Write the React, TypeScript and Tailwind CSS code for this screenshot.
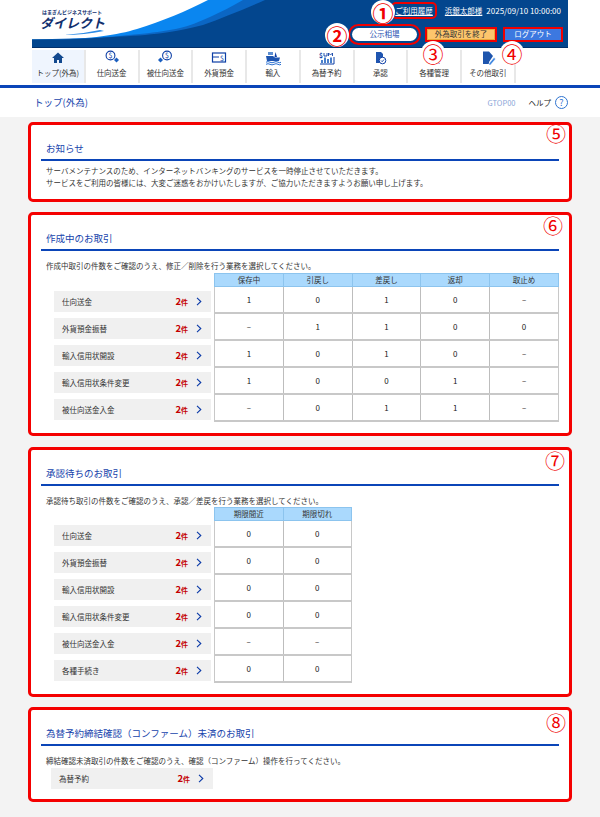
import React from "react";

const F = '"Noto Sans CJK JP", "Noto Sans", sans-serif';

function Ic({ children, w = 18 }: { children: React.ReactNode; w?: number }) {
  return (
    <svg width={w} height="16" viewBox="0 0 18 16" fill="none">
      {children}
    </svg>
  );
}

const icons: React.ReactNode[] = [
  <Ic key="home">
    <path d="M9 2.5 L3 8 H5 V13 H8 V10 H10 V13 H13 V8 H15 Z" fill="#12498f" />
  </Ic>,
  <Ic key="out">
    <circle cx="7.5" cy="5.5" r="4.4" stroke="#0d3fa6" strokeWidth="1.1" fill="#fff" />
    <text x="7.5" y="8" textAnchor="middle" fontSize="7" fill="#0d3fa6">$</text>
    <path d="M13.5 7.5 L16 10 L13.5 12.5 L11 10 Z" fill="#1b5fc0" />
  </Ic>,
  <Ic key="in">
    <circle cx="11" cy="5.5" r="4.4" stroke="#0d3fa6" strokeWidth="1.1" fill="#fff" />
    <text x="11" y="8" textAnchor="middle" fontSize="7" fill="#0d3fa6">$</text>
    <path d="M4.5 7.5 L7 10 L4.5 12.5 L2 10 Z" fill="#1b5fc0" />
  </Ic>,
  <Ic key="dep">
    <rect x="2.5" y="3" width="13" height="9" stroke="#0d3fa6" strokeWidth="1.2" fill="#fff" />
    <path d="M2.5 7 H9" stroke="#0d3fa6" strokeWidth="1" />
    <text x="12" y="10.5" textAnchor="middle" fontSize="7" fill="#0d3fa6">$</text>
  </Ic>,
  <Ic key="imp">
    <path d="M4 2 H9 V5 H4 Z" fill="#5f8fd0" />
    <path d="M11.5 2 L13 7 H10.5 Z" fill="#0d3fa6" />
    <path d="M2 6 H9 L11 7.5 H16 L15 11 H3 Z" fill="#1f55b0" />
    <path d="M2 12.2 Q4 11 6 12.2 T10 12.2 T14 12.2 T17 12.2 M2 14.3 Q4 13.1 6 14.3 T10 14.3 T14 14.3 T17 14.3" stroke="#2a6fd0" strokeWidth="1" />
  </Ic>,
  <Ic key="fx">
    <text x="1" y="8" fontSize="6.5" fontWeight="700" fill="#0d3fa6">$</text>
    <path d="M6 3 V6 H9 V3 M10.5 6 V3 L12.5 5 L14.5 3 V6" stroke="#0d3fa6" strokeWidth="0.9" />
    <path d="M2 14 H16 V7" stroke="#0d3fa6" strokeWidth="1" />
    <path d="M4 13 V10 M7 13 V7.5 M10 13 V9 M13 13 V7.5" stroke="#1b5fc0" strokeWidth="1.6" />
  </Ic>,
  <Ic key="app">
    <path d="M5 2 H10 L12 4 V8 L9 13 H5 Z" fill="#1f55b0" />
    <circle cx="11.5" cy="10.5" r="3.3" fill="#fff" stroke="#0d3fa6" strokeWidth="1" />
    <path d="M10 10.5 L11.2 11.7 L13 9.5" stroke="#0d3fa6" strokeWidth="0.9" />
  </Ic>,
  <Ic key="mgr">
    <circle cx="9" cy="5" r="3" fill="#1f55b0" />
    <path d="M3 14 Q9 7 15 14 Z" fill="#0d3fa6" />
  </Ic>,
  <Ic key="oth">
    <path d="M4 1.5 H10 L14 6 L10 12 V14 H4 Z" fill="#1e55ad" />
    <path d="M10 13.5 L15 7.5 L16.5 9 L11.5 15 H10 Z" fill="#3f87e0" stroke="#fff" strokeWidth="0.5" />
  </Ic>,
];

const nav = ["トップ(外為)", "仕向送金", "被仕向送金", "外貨預金", "輸入", "為替予約", "承認", "各種管理", "その他取引"];

function Chevron() {
  return (
    <svg width="6" height="9" viewBox="0 0 6 9" fill="none">
      <path d="M1 0.8 L4.8 4.5 L1 8.2" stroke="#0b3aa8" strokeWidth="1.1" />
    </svg>
  );
}

function Count() {
  return (
    <span className="text-[#c40000] flex items-baseline">
      <span className="text-[9.5px] font-bold leading-none">2</span>
      <span className="text-[7px] font-bold leading-none">件</span>
    </span>
  );
}

function Label({ text }: { text: string }) {
  return (
    <div className="h-[21px] bg-[#f0f0f0] flex items-center pl-[8px] text-[7.5px] text-[#333]">
      <span className="flex-1">{text}</span>
      <Count />
      <span className="ml-[8px] mr-[9px] flex">
        <Chevron />
      </span>
    </div>
  );
}

function Grid({ heads, rows, className }: { heads: string[]; rows: string[][]; className: string }) {
  return (
    <div className={"flex flex-col shrink-0 " + className}>
      <div className="flex h-[14px] bg-[#aad9fd] border border-[#8cc4ee]">
        {heads.map((h, i) => (
          <div key={h} className={"flex-1 flex items-center justify-center text-[7.5px] text-[#333] " + (i < heads.length - 1 ? "border-r border-[#8cc4ee]" : "")}>
            {h}
          </div>
        ))}
      </div>
      {rows.map((r, i) => (
        <div key={i} className="flex h-[27px] bg-white border-l border-r border-b-2 border-[#c8c8c8]">
          {r.map((c, j) => (
            <div key={j} className={"flex-1 flex items-center justify-center text-[8px] text-[#222] " + (j < r.length - 1 ? "border-r border-[#bdbdbd]" : "")}>
              {c}
            </div>
          ))}
        </div>
      ))}
    </div>
  );
}

function Card({ title, children, className }: { title: string; children: React.ReactNode; className: string }) {
  return (
    <section className={"border-[3px] border-[#f40000] rounded-[5px] bg-white px-[10px] pt-[17px] " + className}>
      <div className="border-b-2 pb-[5px] border-[#0b45b8] pl-[5px]">
        <h2 className="text-[9.5px] leading-[12px] text-[#1744ac]">{title}</h2>
      </div>
      {children}
    </section>
  );
}

function Mark({ n, className }: { n: string; className: string }) {
  return <span className={"absolute text-[#f00000] flex items-center justify-center leading-[24px] " + className}>{n}</span>;
}

const rowsA = [
  ["1", "0", "1", "0", "–"],
  ["–", "1", "1", "0", "0"],
  ["1", "0", "1", "0", "–"],
  ["1", "0", "0", "1", "–"],
  ["–", "0", "1", "1", "–"],
];
const rowsB = [
  ["0", "0"],
  ["0", "0"],
  ["0", "0"],
  ["0", "0"],
  ["–", "–"],
  ["0", "0"],
];

export default function App() {
  return (
    <div className="relative w-[600px] h-[817px] bg-[#f3f3f3] overflow-hidden" style={{ fontFamily: F }}>
      <div className="bg-white">
        {/* header */}
        <header className="relative mx-[32px] h-[48px]">
          <svg className="absolute inset-0" width="536" height="48" viewBox="0 0 536 48">
            <path d="M20 39.5 C60 39 85 35 105 29 C130 21 155 11 176 0 H536 V48 H0 V39.5 Z" fill="#0a86f0" />
            <path d="M60 38 C100 35 125 33 148 28 C165 24 190 12 211 0 H536 V48 H0 V39.5 Z" fill="#0b66c4" />
            <path d="M0 39.5 H31 C50 39 65 38 81 37 C100 36 115 35 131 33 C150 30 160 28 171 25 C190 18 210 10 233 0 H536 V48 H0 Z" fill="#03468e" />
            <path d="M0 47.5 H536" stroke="#02306a" strokeWidth="1" />
          </svg>
          <div className="absolute left-[8px] top-[8px] w-[66px]">
            <div className="pl-[2px] text-[5px] leading-[8px] font-bold text-[#12306e] whitespace-nowrap">はまぎんビジネスサポート</div>
            <div className="text-[13px] leading-[14px] font-bold italic text-[#12306e] whitespace-nowrap">ダイレクト</div>
            <svg width="66" height="5" viewBox="0 0 66 5" className="block">
              <path d="M24 5 Q42 4 60 0 L64 1 Q44 5 24 5 Z" fill="#2c8be6" />
            </svg>
          </div>
          <div className="relative flex flex-col items-end h-full pr-[7px] text-white">
            <div className="flex items-center h-[21px] text-[7.5px]">
              <span className="underline ring-2 ring-[#f00000] rounded-[3px] px-[2px] py-[1px] mr-[10px]">ご利用履歴</span>
              <span className="underline mr-[4px]">浜銀太郎様</span>
              <span className="text-[8px]">2025/09/10 10:00:00</span>
            </div>
            <div className="flex items-center h-[20px] mt-[3px] gap-[10px]">
              <button className="w-[65px] h-[13px] bg-white rounded-full text-[#1c4fb0] text-[7.5px] leading-none outline-2 outline-[#f00000] outline-offset-2">公示相場</button>
              <button className="w-[68px] h-[11px] bg-[#fdc56c] border border-[#e8a93a] text-[#333] text-[7.5px] leading-none outline-2 outline-[#f00000]">外為取引を終了</button>
              <button className="w-[56px] h-[11px] bg-[#3c78e0] text-white text-[7.5px] leading-none outline-2 outline-[#f00000]">ログアウト</button>
            </div>
          </div>
        </header>
        {/* nav */}
        <nav className="mt-[2px] h-[35px] border-b-[3px] border-[#0b45b8] box-content">
          <div className="flex pl-[32px] h-[33px]">
            {nav.map((n, i) => (
              <div key={n} className={"w-[53.75px] flex flex-col items-center border-r-2 border-[#e8e8e8] " + (i === 0 ? "bg-[#eff5fe]" : "bg-white")}>
                <span className="flex h-[17px]">{icons[i]}</span>
                <span className="text-[7.5px] leading-[12px] text-[#333] whitespace-nowrap">{n}</span>
              </div>
            ))}
          </div>
        </nav>
        {/* title row */}
        <div className="h-[29px] pl-[34px] pr-[32px] flex items-center">
          <h1 className="text-[9.5px] text-[#1744ac] flex-1">トップ(外為)</h1>
          <span className="text-[7.5px] text-[#8aa5d8] mr-[13px]">GTOP00</span>
          <span className="text-[7.5px] text-[#222] mr-[4px]">ヘルプ</span>
          <span className="w-[13px] h-[13px] rounded-full border-[1.5px] border-[#2f74d0] text-[#2f74d0] text-[9px] flex items-center justify-center leading-none">?</span>
        </div>
      </div>

      {/* cards */}
      <main className="px-[28px] pt-[5px] flex flex-col">
        <Card title="お知らせ" className="pb-[10px]">
          <p className="mt-[4px] pl-[5px] text-[7.5px] leading-[12px] text-[#333]">
            サーバメンテナンスのため、インターネットバンキングのサービスを一時停止させていただきます。
            <br />
            サービスをご利用の皆様には、大変ご迷惑をおかけいたしますが、ご協力いただきますようお願い申し上げます。
          </p>
        </Card>

        <Card title="作成中のお取引" className="mt-[10px] pb-[11px]">
          <p className="mt-[9px] pl-[5px] text-[7.5px] leading-[12px] text-[#333]">作成中取引の件数をご確認のうえ、修正／削除を行う業務を選択してください。</p>
          <div className="flex mt-[1px]">
            <div className="ml-[13px] w-[157px] mr-[3px] shrink-0 pt-[18px] flex flex-col gap-[6px]">
              {["仕向送金", "外貨預金振替", "輸入信用状開設", "輸入信用状条件変更", "被仕向送金入金"].map((t) => (
                <Label key={t} text={t} />
              ))}
            </div>
            <Grid className="w-[345px]" heads={["保存中", "引戻し", "差戻し", "返却", "取止め"]} rows={rowsA} />
          </div>
        </Card>

        <Card title="承認待ちのお取引" className="mt-[11px] pb-[11px]">
          <p className="mt-[9px] pl-[5px] text-[7.5px] leading-[12px] text-[#333]">承認待ち取引の件数をご確認のうえ、承認／差戻を行う業務を選択してください。</p>
          <div className="flex">
            <div className="ml-[13px] w-[157px] mr-[3px] shrink-0 pt-[18px] flex flex-col gap-[6px]">
              {["仕向送金", "外貨預金振替", "輸入信用状開設", "輸入信用状条件変更", "被仕向送金入金", "各種手続き"].map((t) => (
                <Label key={t} text={t} />
              ))}
            </div>
            <Grid className="w-[138px]" heads={["期限間近", "期限切れ"]} rows={rowsB} />
          </div>
        </Card>

        <Card title="為替予約締結確認（コンファーム）未済のお取引" className="mt-[10px] pb-[10px]">
          <p className="mt-[9px] pl-[5px] text-[7.5px] leading-[12px] text-[#333]">締結確認未済取引の件数をご確認のうえ、確認（コンファーム）操作を行ってください。</p>
          <div className="ml-[10px] w-[162px] mt-[1px]">
            <Label text="為替予約" />
          </div>
        </Card>
      </main>

      {/* annotation numbers */}
      <Mark n="①" className="left-[371px] top-[0px] w-[24px] h-[24px] text-[21px] bg-white rounded-full font-bold" />
      <Mark n="②" className="left-[325px] top-[23px] w-[24px] h-[24px] text-[21px] bg-white rounded-full font-bold" />
      <Mark n="③" className="left-[421px] top-[41px] w-[24px] h-[24px] text-[21px] bg-white rounded-full" />
      <Mark n="④" className="left-[500px] top-[41px] w-[24px] h-[24px] text-[21px] bg-white rounded-full" />
      <Mark n="⑤" className="left-[544px] top-[122px] w-[24px] h-[24px] text-[20px]" />
      <Mark n="⑥" className="left-[541px] top-[214px] w-[24px] h-[24px] text-[20px]" />
      <Mark n="⑦" className="left-[543px] top-[449px] w-[24px] h-[24px] text-[20px]" />
      <Mark n="⑧" className="left-[544px] top-[711px] w-[24px] h-[24px] text-[20px]" />
    </div>
  );
}
